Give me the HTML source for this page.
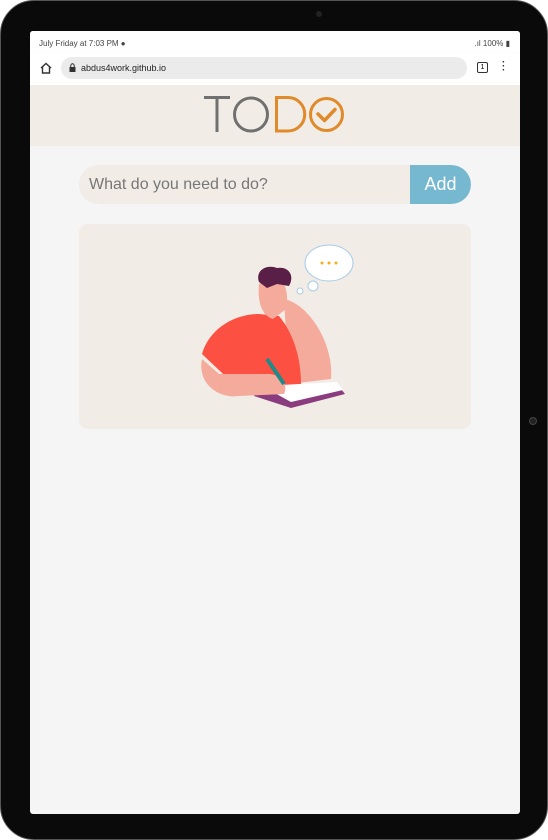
<!DOCTYPE html>
<html><head><meta charset="utf-8"><style>
*{margin:0;padding:0;box-sizing:border-box}
html,body{width:548px;height:840px;background:#fff;overflow:hidden;font-family:"Liberation Sans",sans-serif}
.dev{position:absolute;left:0;top:0;width:548px;height:840px;background:#0a0a0a;border-radius:34px;border:1px solid #555}
.screen{position:absolute;left:29px;top:30px;width:490px;height:783px;background:#f5f5f5;overflow:hidden;border-radius:3px}
.status{height:22px;background:#fff;font-size:8px;color:#444;padding:8px 0 0 9px;position:relative}
.status .r{position:absolute;right:10px;top:8px}
.url{height:32px;background:#fff;position:relative;box-shadow:0 1px 2px rgba(0,0,0,.15)}
.pill{position:absolute;left:31px;top:4px;width:406px;height:22px;background:#ebebeb;border-radius:11px;font-size:9px;color:#222;padding:6px 0 0 20px}
.hdr{height:61px;background:#f1ece6;position:relative}
.inp{position:absolute;left:49px;top:134px;width:392px;height:39px;background:#f1ece6;border-radius:20px;overflow:hidden}
.inp span{position:absolute;left:10px;top:11px;font-size:16px;color:#777}
.add{position:absolute;right:0;top:0;width:61px;height:39px;background:#76b8cf;border-radius:0 20px 20px 0;color:#fff;font-size:18px;text-align:center;line-height:39px}
.card{position:absolute;left:49px;top:193px;width:392px;height:205px;background:#f1ece6;border-radius:9px}
</style></head><body>
<div class="dev">
<div style="position:absolute;left:315px;top:10px;width:6px;height:6px;border-radius:3px;background:#222"></div>
<div style="position:absolute;left:528px;top:416px;width:8px;height:8px;border-radius:4px;background:#222;border:1px solid #444"></div>
<div class="screen">
<div class="status">July Friday at 7:03 PM ●<span class="r">.ıl 100% ▮</span></div>
<div class="url">
<svg style="position:absolute;left:9px;top:8px" width="14" height="14" viewBox="0 0 14 14"><path d="M2 7L7 2.5 12 7M3.5 6v6h7V6" fill="none" stroke="#333" stroke-width="1.4"/></svg>
<div class="pill"><svg style="position:absolute;left:8px;top:6px" width="7" height="9" viewBox="0 0 7 9"><rect x="0.5" y="4" width="6" height="5" fill="#333"/><path d="M1.8 4V2.5a1.7 1.7 0 013.4 0V4" fill="none" stroke="#333"/></svg>abdus4work.github.io</div>
<div style="position:absolute;left:447px;top:9px;width:11px;height:11px;border:1.3px solid #333;border-radius:2px;font-size:7px;text-align:center;line-height:9px">1</div>
<div style="position:absolute;left:472px;top:8px;font-size:10px;color:#333;line-height:4px;font-weight:bold">·<br>·<br>·</div>
</div>
<div class="hdr">
<svg style="position:absolute;left:0;top:0" width="490" height="61" viewBox="0 0 490 61">
<path d="M174 12.5H200M187 12.5V47" stroke="#707070" stroke-width="3" fill="none"/>
<circle cx="221" cy="29.5" r="16.5" stroke="#707070" stroke-width="3" fill="none"/>
<path d="M246.5 12.5V46H258A16.75 16.75 0 0 0 258 12.5Z" stroke="#e08a2a" stroke-width="3" fill="none"/>
<circle cx="296.5" cy="29.5" r="16" stroke="#e08a2a" stroke-width="3" fill="none"/>
<path d="M288 29L294.5 35.5 305 24.5" stroke="#e08a2a" stroke-width="3.5" fill="none" stroke-linecap="round" stroke-linejoin="round"/>
</svg>
</div>
<div class="inp"><span>What do you need to do?</span><div class="add">Add</div></div>
<div class="card">
<svg width="392" height="205" viewBox="0 0 392 205">
<ellipse cx="250" cy="39" rx="24" ry="18" fill="#fff" stroke="#a8cbe8"/>
<circle cx="234" cy="62" r="5" fill="#fff" stroke="#a8cbe8"/>
<circle cx="221" cy="67" r="3" fill="#fff" stroke="#a8cbe8"/>
<circle cx="243" cy="39" r="1.5" fill="#f2b01c"/><circle cx="250" cy="39" r="1.5" fill="#f2b01c"/><circle cx="257" cy="39" r="1.5" fill="#f2b01c"/>
<path d="M205 75C230 80 255 120 252 155L210 160Z" fill="#f4ab9c"/>
<path d="M123 130C130 105 155 90 180 90L200 92C215 110 222 135 222 160L160 165Z" fill="#fc5142"/>
<path d="M180 60C178 80 184 92 194 95L207 85C210 70 207 55 194 52Z" fill="#f4ab9c"/>
<path d="M180 58C176 46 188 40 198 44C210 42 216 52 210 62L198 60L188 64Z" fill="#5a1f46"/>
<path d="M180 160L262 165L266 170L212 184L175 172Z" fill="#8b3c7f"/>
<path d="M183 162L258 158L264 166L212 178Z" fill="#fff"/>
<path d="M123 135C118 160 140 175 160 172L205 170C210 160 200 150 190 150L140 150Z" fill="#f4ab9c"/>
<path d="M188 135L205 160" stroke="#1f8a8a" stroke-width="4"/>
</svg>
</div>
</div>
</div>
</body></html>
